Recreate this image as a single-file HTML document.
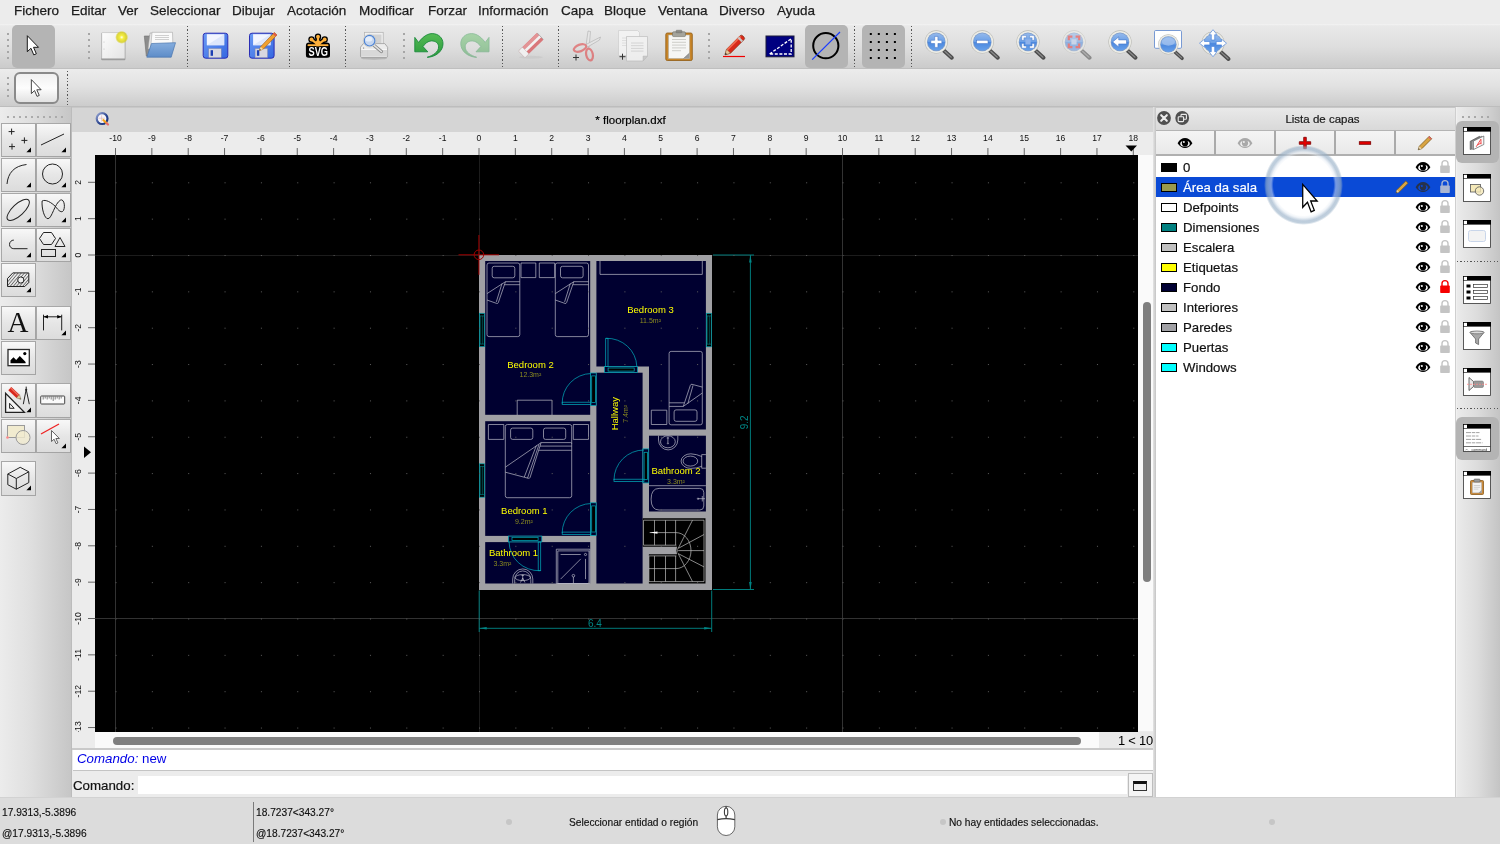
<!DOCTYPE html>
<html lang="es">
<head>
<meta charset="utf-8">
<title>* floorplan.dxf</title>
<style>
*{box-sizing:border-box;margin:0;padding:0}
html,body{width:1500px;height:844px;overflow:hidden;background:#dcdcdc;font-family:"Liberation Sans",sans-serif;color:#000}
body{will-change:transform}
.abs{position:absolute}
#menubar{position:absolute;left:0;top:0;width:1500px;height:24px;background:#ececec}
#menubar span{position:absolute;top:2px;font-size:13.5px;line-height:17px;color:#1c1c1c;white-space:nowrap;-webkit-text-stroke:.25px #1c1c1c}
#tb1{position:absolute;left:0;top:24px;width:1500px;height:45px;background:linear-gradient(#f4f4f4 0,#e9e9e9 4%,#dfdfdf 50%,#cbcbcb 100%);border-bottom:1px solid #bfbfbf}
#tb2{position:absolute;left:0;top:69px;width:1500px;height:38px;background:linear-gradient(#ececec 0,#e2e2e2 45%,#cccccc 100%);border-bottom:1px solid #bdbdbd}
.sel{position:absolute;background:#b4b4b4;border-radius:5px}
.vsep{position:absolute;width:1px;background:repeating-linear-gradient(to bottom,#555 0,#555 1.2px,transparent 1.2px,transparent 3.33px)}
.grip{position:absolute;width:2px;background:repeating-linear-gradient(to bottom,#a6a6a6 0,#a6a6a6 2px,transparent 2px,transparent 6px)}
#left{position:absolute;left:0;top:107px;width:72px;height:691.5px;background:linear-gradient(90deg,#ececec,#e0e0e0 40%,#c6c6c6);border-right:1px solid #bcbcbc}
.tbtn{position:absolute;width:34.5px;height:34.5px;background:linear-gradient(#f8f8f8,#e6e6e6 50%,#dcdcdc);border:1px solid #a4a4a4;border-top-color:#a8a8a8;border-left-color:#a8a8a8}
.tbtn svg{position:absolute;left:-1px;top:-1px}
#center{position:absolute;left:72px;top:107px;width:1081px;height:690px;background:#ececec}
#tabbar{position:absolute;left:0;top:0;width:1081px;height:25px;background:#d5d5d5}
#canvas{position:absolute;left:23px;top:48px;width:1043px;height:577px;background:#000}
#status{position:absolute;left:0;top:797px;width:1500px;height:47px;background:#dcdcdc}
#status div{position:absolute;font-size:10.2px;white-space:nowrap;color:#111;-webkit-text-stroke:.15px}
#right{position:absolute;left:1153px;top:107px;width:301.5px;height:690px;background:#ececec}
#rtb{position:absolute;left:1454.5px;top:107px;width:45.5px;height:690px;background:linear-gradient(90deg,#ececec,#dcdcdc 50%,#c4c4c4)}
</style>
</head>
<body>
<div id="menubar">
<span style="left:14px">Fichero</span>
<span style="left:71px">Editar</span>
<span style="left:118px">Ver</span>
<span style="left:150px">Seleccionar</span>
<span style="left:232px">Dibujar</span>
<span style="left:287px">Acotación</span>
<span style="left:359px">Modificar</span>
<span style="left:428px">Forzar</span>
<span style="left:478px">Información</span>
<span style="left:561px">Capa</span>
<span style="left:604px">Bloque</span>
<span style="left:658px">Ventana</span>
<span style="left:719px">Diverso</span>
<span style="left:777px">Ayuda</span>
</div>
<div id="tb1">
<div class="grip" style="left:7px;top:9px;height:26px"></div>
<div class="sel" style="left:12px;top:1px;width:43px;height:43px"></div>
<div class="grip" style="left:88px;top:9px;height:26px"></div>
<div class="vsep" style="left:187px;top:2px;height:41px"></div>
<div class="vsep" style="left:289px;top:2px;height:41px"></div>
<div class="vsep" style="left:345px;top:2px;height:41px"></div>
<div class="grip" style="left:403px;top:9px;height:26px"></div>
<div class="vsep" style="left:502px;top:2px;height:41px"></div>
<div class="vsep" style="left:558px;top:2px;height:41px"></div>
<div class="grip" style="left:708px;top:9px;height:26px"></div>
<div class="sel" style="left:805px;top:1px;width:43px;height:43px"></div>
<div class="vsep" style="left:854px;top:2px;height:41px"></div>
<div class="sel" style="left:862px;top:1px;width:43px;height:43px"></div>
<div class="vsep" style="left:911px;top:2px;height:41px"></div>
</div>
<div id="tb2">
<div class="grip" style="left:7px;top:8px;height:20px"></div>
<div class="abs" style="left:14px;top:3px;width:44.5px;height:32px;border:2px solid #8a8a8a;border-radius:6px;background:linear-gradient(#f0f0f0,#fdfdfd 50%,#e2e2e2)"></div>
<div class="vsep" style="left:67px;top:2px;height:34px"></div>
</div>
<svg class="abs" style="left:0;top:24px" width="1500" height="84" viewBox="0 24 1500 84" font-family="Liberation Sans, sans-serif">
<defs>
<linearGradient id="gPaper" x1="0" y1="0" x2="1" y2="1"><stop offset="0" stop-color="#fdfdfd"/><stop offset="1" stop-color="#e4e4e4"/></linearGradient>
<radialGradient id="gGlow"><stop offset="0" stop-color="#fffff0"/><stop offset=".3" stop-color="#f4ee40"/><stop offset=".75" stop-color="#d8d020" stop-opacity=".85"/><stop offset="1" stop-color="#d8d020" stop-opacity="0"/></radialGradient>
<linearGradient id="gFold" x1="0" y1="0" x2="0" y2="1"><stop offset="0" stop-color="#86aede"/><stop offset="1" stop-color="#5d8cc8"/></linearGradient>
<linearGradient id="gFlop" x1="0" y1="0" x2="1" y2="1"><stop offset="0" stop-color="#6b9bf5"/><stop offset="1" stop-color="#3567e0"/></linearGradient>
<linearGradient id="gLens" x1="0" y1="0" x2="0" y2="1"><stop offset="0" stop-color="#94b9ec"/><stop offset=".5" stop-color="#6a9fe6"/><stop offset=".52" stop-color="#4c88de"/><stop offset="1" stop-color="#66a0ea"/></linearGradient>
<linearGradient id="gGreen" x1="0" y1="0" x2="0" y2="1"><stop offset="0" stop-color="#55bb55"/><stop offset="1" stop-color="#2a9a3c"/></linearGradient>
<g id="mag"><path d="M7.500 8.500L15.500 15.800" stroke="#4d4d4d" stroke-width="4" stroke-linecap="round"/><path d="M8.500 9.400L15 15.300" stroke="#8a8a8a" stroke-width="1.200" stroke-linecap="round"/><circle r="11.600" fill="#b9b9b3"/><circle r="11" fill="#ecece6"/><circle r="9.300" fill="#7f9cc8"/><circle r="8.700" fill="url(#gLens)"/></g>
<g id="arrow"><path d="M2.800 2.200v19.600l4.500-4.200 3.400 8.100 3.100-1.300-3.400-7.900h6.100z" fill="#fff" stroke="#000" stroke-width="1.200"/></g>
</defs>
<g transform="translate(25.3,34.1) scale(.8)"><path d="M2.500 2v20l4.600-4.300 3.500 8.300 3.200-1.400-3.500-8.100h6.200z" fill="#fff" stroke="#111" stroke-width="1.200"/></g>
<g transform="translate(29.6,78.2) scale(.7)"><path d="M2.500 2v20l4.600-4.300 3.500 8.300 3.200-1.400-3.500-8.100h6.200z" fill="#fff" stroke="#333" stroke-width="1.300"/></g>
<rect x="101.200" y="32.800" width="24.200" height="27.400" rx="1" fill="#9a9a9a"/><rect x="101.700" y="32.600" width="23.200" height="26" rx=".8" fill="url(#gPaper)" stroke="#bdbdbd" stroke-width=".6"/><circle cx="104" cy="42" r=".5" fill="#bbb"/><circle cx="104" cy="49" r=".5" fill="#bbb"/><circle cx="121.700" cy="37.300" r="6.600" fill="url(#gGlow)"/>
<path d="M144.300 36h5l1.500-1.500h9v21.500h-13.500z" fill="#8c8c8c" stroke="#6e6e6e" stroke-width=".6"/><path d="M150 33h21.500l-1 16h-22.500z" fill="#e8e8e8" stroke="#9a9a9a" stroke-width=".5"/><path d="M152 32.300h20.500l.5 17h-22.500z" fill="#fafafa" stroke="#9a9a9a" stroke-width=".5"/><path d="M155 35.500h14M155 37.500h14M155 39.500h14" stroke="#c4c4c4" stroke-width=".8"/><path d="M151.500 43.500l24-.8-4.300 14.500h-24.400z" fill="url(#gFold)" stroke="#4a76ae" stroke-width=".7"/>
<rect x="203.2" y="33.200" width="24.600" height="25" rx="2.500" fill="url(#gFlop)" stroke="#2a2db4" stroke-width="1"/><rect x="206.79999999999998" y="34.200" width="17.400" height="11" fill="#f2f5ff"/><path d="M206.79999999999998 45.200l17.400-11v11z" fill="#dde6fb"/><rect x="208.79999999999998" y="48.600" width="12.400" height="9" fill="#d8d8e0" stroke="#8a8aa0" stroke-width=".4"/><rect x="210.6" y="50.200" width="2.400" height="5.600" fill="#1c3fb4"/>
<rect x="249.5" y="33.200" width="24.600" height="25" rx="2.500" fill="url(#gFlop)" stroke="#2a2db4" stroke-width="1"/><rect x="253.1" y="34.200" width="17.400" height="11" fill="#f2f5ff"/><path d="M253.1 45.200l17.400-11v11z" fill="#dde6fb"/><rect x="255.1" y="48.600" width="12.400" height="9" fill="#d8d8e0" stroke="#8a8aa0" stroke-width=".4"/><rect x="256.9" y="50.200" width="2.400" height="5.600" fill="#1c3fb4"/>
<path d="M274.300 32.400l2.700 2.600-13.800 14.200-3.800 1.400 1.300-3.900z" fill="#f0a030" stroke="#9c5a10" stroke-width=".6"/><path d="M259.400 50.600l1.300-3.900 2.500 2.500z" fill="#f0dcb0"/><path d="M259.400 50.600l.55-1.600 1 1z" fill="#222"/><path d="M274.300 32.400l2.700 2.600-1.500 1.500-2.700-2.600z" fill="#e05a4a"/>
<g stroke-linecap="round"><path d="M318 44.500V36.900M318 44.500L311.600 39.700M318 44.500L324.600 39.700" stroke="#000" stroke-width="4.800"/><circle cx="318" cy="36.700" r="3.200" fill="#000"/><circle cx="311.500" cy="39.500" r="3.200" fill="#000"/><circle cx="324.700" cy="39.500" r="3.200" fill="#000"/><rect x="305.900" y="42.600" width="24.100" height="15.200" rx="3.200" fill="#000"/><path d="M318 44.500V36.900M318 44.500L311.600 39.700M318 44.500L324.600 39.700" stroke="#ffb13b" stroke-width="2.200"/><circle cx="318" cy="36.700" r="1.900" fill="#ffb13b"/><circle cx="311.500" cy="39.500" r="1.900" fill="#ffb13b"/><circle cx="324.700" cy="39.500" r="1.900" fill="#ffb13b"/><path d="M318 45V42.500" stroke="#ffb13b" stroke-width="4.600"/></g><rect x="307.500" y="44.300" width="21" height="1.900" rx=".9" fill="#ffb13b"/><rect x="306.500" y="46.400" width="23" height="10.800" fill="#000"/><text x="318.300" y="56.300" font-size="12.800" font-weight="bold" fill="#fff" text-anchor="middle" textLength="19.500" lengthAdjust="spacingAndGlyphs">SVG</text>
<ellipse cx="374" cy="58.200" rx="13" ry="1.600" fill="#9a9a9a" opacity=".55"/><rect x="364.500" y="32.300" width="18.700" height="13" fill="#f0f0f0" stroke="#b0b0b0" stroke-width=".7"/><rect x="372.500" y="34.500" width="9" height="9" fill="#d2d2d2"/><path d="M360.500 47.200l2.800-3.600h21.500l2.800 3.600v8.800a1.500 1.500 0 0 1-1.500 1.500h-24.100a1.500 1.500 0 0 1-1.500-1.500z" fill="#ececec" stroke="#9c9c9c" stroke-width=".8"/><path d="M361 50h26.200v6.600h-26.200z" fill="#d8d8d8"/><path d="M361.500 49.500h25.500" stroke="#fafafa" stroke-width=".8"/><circle cx="363.600" cy="48" r=".6" fill="#666"/><path d="M373.800 45.200l7.600 6.300" stroke="#8c8c8c" stroke-width="3.400" stroke-linecap="round"/><path d="M373.800 45.200l7.600 6.300" stroke="#e4e4e4" stroke-width="1.500" stroke-linecap="round"/><circle cx="369.600" cy="40.700" r="6.400" fill="#ecece8" stroke="#b8b8b0" stroke-width=".5"/><circle cx="369.600" cy="40.700" r="5.300" fill="#c4d6f0" stroke="#4f84d4" stroke-width="1.200"/><ellipse cx="368.800" cy="39" rx="3.600" ry="2.600" fill="#eaf1fb" opacity=".85"/>
<path d="M414.800 37.400L418.600 42.500C421 39 426 33.600 432.200 33.600C438.500 33.600 443 38 443 43.700C443 51 436 57 427.200 57.300C433 55.500 438.600 52 438.600 46.900C438.600 43 435.500 40.900 431.600 40.900C428 40.900 425 43.500 423 46.600L427.800 51.800L414.800 51.800z" fill="url(#gGreen)" stroke="#1b8a3c" stroke-width=".9" stroke-linejoin="round"/>
<g transform="translate(903.800,0) scale(-1,1)" opacity=".42"><path d="M414.800 37.400L418.600 42.500C421 39 426 33.600 432.200 33.600C438.500 33.600 443 38 443 43.700C443 51 436 57 427.200 57.300C433 55.500 438.600 52 438.600 46.900C438.600 43 435.500 40.900 431.600 40.900C428 40.900 425 43.500 423 46.600L427.800 51.800L414.800 51.800z" fill="url(#gGreen)" stroke="#1b8a3c" stroke-width=".9" stroke-linejoin="round"/></g>
<ellipse cx="531" cy="57.300" rx="12" ry="1.500" fill="#c4c4c4" opacity=".6"/><g transform="translate(531,45.300) rotate(-44.200)"><rect x="-13" y="-4.700" width="26" height="9.400" rx="1" fill="#d9777a"/><rect x="-7.500" y="-4.700" width="20.500" height="3.400" fill="#e39496"/><rect x="-13" y="-4.700" width="5.500" height="9.400" rx=".8" fill="#f0f0f0" stroke="#b8b8b8" stroke-width=".4"/><rect x="-7.500" y="-1.300" width="20.500" height="2.600" fill="#f2f2f2"/><path d="M13 -4.500v9" stroke="#a8a8a8" stroke-width=".8"/></g>
<g opacity=".6"><path d="M588 31l2.500.5-1.500 16-3-1.500z" fill="#e8e8e8" stroke="#888" stroke-width=".6"/><path d="M600.500 37l-1 3-12 7-1.500-2.500z" fill="#e8e8e8" stroke="#888" stroke-width=".6"/><ellipse cx="580" cy="48" rx="6.500" ry="3.300" transform="rotate(-20 580 48)" fill="none" stroke="#e0484a" stroke-width="2.200"/><ellipse cx="589.500" cy="54.500" rx="3.300" ry="6" transform="rotate(-12 589.500 54.500)" fill="none" stroke="#e0484a" stroke-width="2.200"/></g><path d="M573 57.500h6M576 54.500v6" stroke="#333" stroke-width="1"/>
<g opacity=".8"><path d="M618.500 30.500h19l2 2v23h-21z" fill="#f6f6f6" stroke="#c4c4c4" stroke-width=".6"/><path d="M622 38h9M622 40.500h9M622 43h9M622 45.500h9" stroke="#d8d8d8" stroke-width=".8"/><path d="M626.500 36.500h21v19.500l-4.500 5h-16.500z" fill="#f4f4f4" stroke="#b4b4b4" stroke-width=".7"/><path d="M647.500 56l-4.500 5v-5z" fill="#c8c8c8" stroke="#aaa" stroke-width=".4"/><path d="M631 43h12.500M631 45.700h12.500M631 48.400h12.500M631 51.100h12.500" stroke="#cdcdcd" stroke-width=".9"/></g><path d="M619.500 56.700h6M622.500 53.700v6" stroke="#333" stroke-width="1"/>
<rect x="665.800" y="33" width="26.500" height="27.500" rx="1.500" fill="#c8862a" stroke="#8f5a12" stroke-width=".8"/><path d="M668.500 35h21v23.500h-21z" fill="#f6f6f4" stroke="#a8a8a0" stroke-width=".5"/><path d="M672 39.500h14M672 42.300h14M672 45.100h14M672 47.900h14M672 50.700h9" stroke="#c8c8c4" stroke-width=".9"/><path d="M689.500 53v5.500h-6z" fill="#9a9a98"/><path d="M683.500 58.500l6-5.500" stroke="#666" stroke-width=".5"/><rect x="672.500" y="31.800" width="13" height="4.800" rx="1.200" fill="#a4a49c" stroke="#6e6e66" stroke-width=".6"/><rect x="676" y="30.200" width="6" height="2.600" rx=".8" fill="#8a8a84" stroke="#666" stroke-width=".4"/>
<path d="M723 56.500h22" stroke="#f00000" stroke-width="1.200"/><g transform="translate(725,54.800) rotate(-45)"><path d="M0 0l5-2.800h19a2 2 0 0 1 2 2v1.600a2 2 0 0 1-2 2h-19z" fill="#d82a1a" stroke="#7a2a10" stroke-width=".6"/><path d="M5-2.800h19v1.800h-19z" fill="#f06a50"/><path d="M0 0l5-2.800v5.600z" fill="#e8c89a" stroke="#7a5a3a" stroke-width=".4"/><path d="M0 0l1.800-1v2z" fill="#222"/><rect x="20.500" y="-2.800" width="2.200" height="5.600" fill="#c8c8c8"/></g>
<rect x="766" y="36" width="28" height="20.800" fill="#000080" stroke="#1a1a3a" stroke-width="1"/><path d="M769.600 54L791.200 38.700V54z" fill="none" stroke="#fff" stroke-width="1.300" stroke-dasharray="3 1.600"/>
<circle cx="825.800" cy="45.700" r="12.600" fill="none" stroke="#000" stroke-width="2"/><path d="M812.200 59.600L840 32" stroke="#1a3cff" stroke-width="1.200"/>
<rect x="869.8" y="33" width="2" height="2" fill="#000"/>
<rect x="869.8" y="41" width="2" height="2" fill="#000"/>
<rect x="869.8" y="49" width="2" height="2" fill="#000"/>
<rect x="869.8" y="57" width="2" height="2" fill="#000"/>
<rect x="877.8" y="33" width="2" height="2" fill="#000"/>
<rect x="877.8" y="41" width="2" height="2" fill="#000"/>
<rect x="877.8" y="49" width="2" height="2" fill="#000"/>
<rect x="877.8" y="57" width="2" height="2" fill="#000"/>
<rect x="885.9" y="33" width="2" height="2" fill="#000"/>
<rect x="885.9" y="41" width="2" height="2" fill="#000"/>
<rect x="885.9" y="49" width="2" height="2" fill="#000"/>
<rect x="885.9" y="57" width="2" height="2" fill="#000"/>
<rect x="893.9" y="33" width="2" height="2" fill="#000"/>
<rect x="893.9" y="41" width="2" height="2" fill="#000"/>
<rect x="893.9" y="49" width="2" height="2" fill="#000"/>
<rect x="893.9" y="57" width="2" height="2" fill="#000"/>
<g transform="translate(936.3,41.900)" opacity="1"><use href="#mag"/><path d="M-5.500 -1.600h3.900v-3.900h3.200v3.900h3.900v3.200h-3.900v3.900h-3.200v-3.900h-3.900z" fill="#fff" stroke="#3a6cc0" stroke-width=".5"/></g>
<g transform="translate(982.3,41.900)" opacity="1"><use href="#mag"/><rect x="-5.700" y="-1.700" width="11.400" height="3.400" fill="#fff" stroke="#3a6cc0" stroke-width=".5"/></g>
<g transform="translate(1028,41.900)" opacity="1"><use href="#mag"/><rect x="-2.600" y="-2.600" width="5.200" height="5.200" fill="#8fb2ea"/><path d="M-6.300-1.600v-4.700h4.700v2.200h-2.500v2.500zM6.300-1.600v-4.700h-4.700v2.200h2.500v2.500zM-6.300 1.600v4.700h4.700v-2.200h-2.500v-2.500zM6.300 1.600v4.700h-4.700v-2.200h2.500v-2.500z" fill="#fff" stroke="#3a6cc0" stroke-width=".4"/></g>
<g transform="translate(1074,41.900)" opacity="0.55"><use href="#mag"/><rect x="-2.600" y="-2.600" width="5.200" height="5.200" fill="#b9cdf0"/><path d="M-6.300-1.600v-4.700h4.700v2.200h-2.500v2.500zM6.300-1.600v-4.700h-4.700v2.200h2.500v2.500zM-6.300 1.600v4.700h4.700v-2.200h-2.500v-2.500zM6.300 1.600v4.700h-4.700v-2.200h2.500v-2.500z" fill="#e63030"/></g>
<g transform="translate(1120,41.900)" opacity="1"><use href="#mag"/><path d="M-7.300 0l6-5v3h7.800v4h-7.800v3z" fill="#fff" stroke="#3a6cc0" stroke-width=".5"/></g>
<rect x="1154.500" y="30.500" width="27" height="17.800" rx="1.200" fill="#fff" stroke="#6a90d0" stroke-width=".9"/>
<g transform="translate(1168.400,44.400) scale(.88)"><use href="#mag"/><ellipse cx="0" cy="-3" rx="7.500" ry="4.500" fill="#a9c6f0" opacity=".7"/></g>
<g transform="translate(1213,43.200)"><use href="#mag"/><g fill="#fff" stroke="#3a78d8" stroke-width=".6"><path d="M0-13.500l4 5h-2.300v5.300h-3.400v-5.300h-2.300z"/><path d="M0-13.500l4 5h-2.300v5.300h-3.400v-5.300h-2.300z" transform="rotate(90)"/><path d="M0-13.500l4 5h-2.300v5.300h-3.400v-5.300h-2.300z" transform="rotate(180)"/><path d="M0-13.500l4 5h-2.300v5.300h-3.400v-5.300h-2.300z" transform="rotate(270)"/></g></g>
</svg>
<div id="left">
<div class="abs" style="left:7px;top:9px;width:57px;height:2px;background:repeating-linear-gradient(to right,#ababab 0,#ababab 2px,transparent 2px,transparent 6px)"></div>
<div class="tbtn" style="left:1.2px;top:15.5px"><svg width="34" height="34" viewBox="0 0 34 34"><path d="M7.6 8.6h6M10.6 5.6v6M20.4 17.4h6M23.4 14.4v6M8 23.6h6M11 20.6v6" fill="none" stroke="#222" stroke-width="1"/><path d="M30 24.600v4.600h-4.600z" fill="#000"/></svg></div>
<div class="tbtn" style="left:36.4px;top:15.5px"><svg width="34" height="34" viewBox="0 0 34 34"><path d="M5 22L28 11" fill="none" stroke="#222" stroke-width="1"/><path d="M30 24.600v4.600h-4.600z" fill="#000"/></svg></div>
<div class="tbtn" style="left:1.2px;top:50.5px"><svg width="34" height="34" viewBox="0 0 34 34"><path d="M6 26C7 15 13 8 25.5 6.5" fill="none" stroke="#222" stroke-width="1"/><path d="M30 24.600v4.600h-4.600z" fill="#000"/></svg></div>
<div class="tbtn" style="left:36.4px;top:50.5px"><svg width="34" height="34" viewBox="0 0 34 34"><circle cx="16.5" cy="16" r="10" fill="none" stroke="#222" stroke-width="1"/><path d="M30 24.600v4.600h-4.600z" fill="#000"/></svg></div>
<div class="tbtn" style="left:1.2px;top:85.5px"><svg width="34" height="34" viewBox="0 0 34 34"><ellipse cx="17.200" cy="16.900" rx="14.300" ry="5.700" transform="rotate(-43 17.200 16.900)" fill="none" stroke="#222" stroke-width="1"/><path d="M30 24.600v4.600h-4.600z" fill="#000"/></svg></div>
<div class="tbtn" style="left:36.4px;top:85.5px"><svg width="34" height="34" viewBox="0 0 34 34"><path d="M6.100 8C5.500 15.500 8.500 26 12 25.700C16 25.500 18.500 10.500 24.500 7.100C28 5.500 29.500 13.500 27.500 17.500C25.500 20.500 22.500 17.500 19.400 13.500C15.500 9.500 9.500 6 6.100 8z" fill="none" stroke="#222" stroke-width="1"/><path d="M30 24.600v4.600h-4.600z" fill="#000"/></svg></div>
<div class="tbtn" style="left:1.2px;top:120.5px"><svg width="34" height="34" viewBox="0 0 34 34"><path d="M26.500 20.700H12.800a4.300 4.300 0 0 1 0-8.600" fill="none" stroke="#222" stroke-width="1"/><path d="M30 24.600v4.600h-4.600z" fill="#000"/></svg></div>
<div class="tbtn" style="left:36.4px;top:120.5px"><svg width="34" height="34" viewBox="0 0 34 34"><path d="M7.500 4.500h8l4 6-4 6h-8l-4-6z" fill="none" stroke="#222" stroke-width="1"/><path d="M24 9.500l5 9h-10z" fill="none" stroke="#222" stroke-width="1"/><rect x="5.500" y="21.500" width="14" height="7" fill="none" stroke="#222" stroke-width="1"/><path d="M30 24.600v4.600h-4.600z" fill="#000"/></svg></div>
<div class="tbtn" style="left:1.2px;top:155.5px"><svg width="34" height="34" viewBox="0 0 34 34"><defs><pattern id="hp" width="2.400" height="2.400" patternUnits="userSpaceOnUse" patternTransform="rotate(-50)"><rect width="2.400" height=".7" fill="#555"/></pattern></defs><path d="M6.500 23.500V15.500l5.300-5.600h16v9.600l-4 4z" fill="url(#hp)" stroke="#222" stroke-width="1"/><circle cx="19.800" cy="17" r="3.100" fill="#f0f0f0" stroke="#222" stroke-width="1"/><path d="M30 24.600v4.600h-4.600z" fill="#000"/></svg></div>
<div class="tbtn" style="left:1.2px;top:198.5px"><svg width="34" height="34" viewBox="0 0 34 34"><text x="17" y="26.200" font-family="Liberation Serif,serif" font-size="29" text-anchor="middle" fill="#111">A</text></svg></div>
<div class="tbtn" style="left:36.4px;top:198.5px"><svg width="34" height="34" viewBox="0 0 34 34"><path d="M7.500 8.700v15.700M25.700 8.700v15.700M7.500 10.800h18.200" fill="none" stroke="#222" stroke-width="1"/><path d="M7.500 10.800l4.500-1.800v3.600zM25.700 10.800l-4.500-1.800v3.600z" fill="#000"/><path d="M30 24.600v4.600h-4.600z" fill="#000"/></svg></div>
<div class="tbtn" style="left:1.2px;top:233.5px"><svg width="34" height="34" viewBox="0 0 34 34"><rect x="7" y="8.500" width="21.300" height="16.200" fill="#fff" stroke="#2a2a2a" stroke-width="1.300"/><path d="M9.500 22.300v-3l3-3 2.700 2.600 3.600-4 5.800 6.200v1.200z" fill="#000"/><circle cx="23.800" cy="12.600" r="1.600" fill="#000"/></svg></div>
<div class="tbtn" style="left:1.2px;top:276px"><svg width="34" height="34" viewBox="0 0 34 34"><path d="M4.6 10.4V29.3H23.4z" fill="#f4f4f4" stroke="#222" stroke-width="1.3"/><path d="M8.6 20.3v5h4.6z" fill="#f4f4f4" stroke="#222" stroke-width="1"/><path d="M8.8 5.6l8.2 7.8" stroke="#d8281c" stroke-width="4.4"/><path d="M9.6 4.9l8.2 7.8" stroke="#f07060" stroke-width="1.2"/><path d="M15.4 14.9l3.1-3.2 1.5 4.6z" fill="#e8c89a" stroke="#553" stroke-width=".4"/><path d="M19 15.200l1 1.100-1.500-.4z" fill="#222"/><path d="M25.2 6.4l-2.900 14.800M25.2 6.400l3.100 14.800M25.2 3.600v2.400" fill="none" stroke="#222" stroke-width="1"/><circle cx="25.2" cy="6.800" r="1.100" fill="#222"/><path d="M30 24.600v4.600h-4.600z" fill="#000"/></svg></div>
<div class="tbtn" style="left:36.4px;top:276px"><svg width="34" height="34" viewBox="0 0 34 34"><g transform="translate(-.8,1.500)"><rect x="5.500" y="11.500" width="24" height="8" rx=".8" fill="#fafafa" stroke="#444" stroke-width="1"/><path d="M8 12v3M10 12v2M12 12v3M14 12v2M16 12v3M18 12v4.500M20 12v3M22 12v2M24 12v3M26 12v2" stroke="#333" stroke-width=".6"/></g></svg></div>
<div class="tbtn" style="left:1.2px;top:311.5px"><svg width="34" height="34" viewBox="0 0 34 34"><rect x="6.500" y="6.500" width="17" height="12" fill="#f1ebcf" stroke="#9a9a9a" stroke-width="1"/><circle cx="22" cy="18.500" r="7" fill="#f1ebcf" fill-opacity=".8" stroke="#9a9a9a" stroke-width="1"/><circle cx="6.500" cy="18.500" r="1.300" fill="#f88"/></svg></div>
<div class="tbtn" style="left:36.4px;top:311.5px"><svg width="34" height="34" viewBox="0 0 34 34"><path d="M5 15L23 5" stroke="#e22" stroke-width="1.300"/><path d="M15.500 11.500v11l2.600-2.300 2 4.500 1.800-.8-2-4.400h3.500z" fill="#fff" stroke="#555" stroke-width=".9"/><path d="M30 24.600v4.600h-4.600z" fill="#000"/></svg></div>
<div class="tbtn" style="left:1.2px;top:354px"><svg width="34" height="34" viewBox="0 0 34 34"><path d="M6.8 13L19.2 6.300L27.8 10.800V21.600L15.300 28.200L6.800 23.700zM6.800 13L15.300 17.500L27.800 10.800M15.300 17.500V28.200" fill="none" stroke="#222" stroke-width="1" stroke-linejoin="round"/><path d="M30 24.600v4.600h-4.600z" fill="#000"/></svg></div>
</div>
<div id="center">
<div id="tabbar"></div>
<div class="abs" style="left:0;top:0;width:1081px;height:1px;background:#c8c8c8"></div>
<div class="abs" style="left:0;width:1081px;top:5.5px;height:14px;text-align:center;font-size:11.5px;line-height:14px;padding-left:36px;-webkit-text-stroke:.2px">* floorplan.dxf</div>
<div id="canvas"></div>
<div class="abs" style="left:1066px;top:48px;width:15px;height:576px;background:#fafafa"></div>
<div class="abs" style="left:1071px;top:195px;width:8px;height:280px;border-radius:4px;background:#7f7f7f"></div>
<div class="abs" style="left:23px;top:625px;width:1004px;height:16px;background:#fafafa"></div>
<div class="abs" style="left:41px;top:630px;width:968px;height:8px;border-radius:4px;background:#7f7f7f"></div>
<div class="abs" style="left:1027px;top:625px;width:54px;height:16px;background:#e9e9e9;font-size:12.9px;line-height:18px;text-align:right;padding-right:0px;letter-spacing:-0.2px">1 &lt; 10</div>
<div class="abs" style="left:0;top:641px;width:1081px;height:49px;background:#ececec"></div>
<div class="abs" style="left:0;top:641px;width:1081px;height:2px;background:#c9c9c9"></div>
<div class="abs" style="left:1px;top:643px;width:1080px;height:21px;background:#fff;border-bottom:1px solid #c4c4c4;font-size:13.3px;line-height:17px;color:#0000e6;padding-left:4px"><i>Comando:</i> new</div>
<div class="abs" style="left:1px;top:671px;width:64px;height:16px;font-size:13.3px;line-height:16px;color:#111;-webkit-text-stroke:.2px">Comando:</div>
<div class="abs" style="left:66px;top:669px;width:988.5px;height:18px;background:#fff"></div>
<div class="abs" style="left:1055.5px;top:665.5px;width:25px;height:24.5px;background:#f4f4f4;border:1px solid #bdbdbd"><div class="abs" style="left:4.500px;top:7px;width:14px;height:10px;border:1px solid #333;border-top:3px solid #111;background:#efefef"></div></div>
</div>
<svg class="abs" style="left:0;top:0" width="1500" height="844" viewBox="0 0 1500 844" font-family="Liberation Sans, sans-serif">
<rect x="115.00" y="148" width="1" height="7" fill="#666"/>
<text x="115.50" y="140.6" font-size="8.6" text-anchor="middle" fill="#111">-10</text>
<rect x="151.35" y="148" width="1" height="7" fill="#666"/>
<text x="151.85" y="140.6" font-size="8.6" text-anchor="middle" fill="#111">-9</text>
<rect x="187.70" y="148" width="1" height="7" fill="#666"/>
<text x="188.20" y="140.6" font-size="8.6" text-anchor="middle" fill="#111">-8</text>
<rect x="224.05" y="148" width="1" height="7" fill="#666"/>
<text x="224.55" y="140.6" font-size="8.6" text-anchor="middle" fill="#111">-7</text>
<rect x="260.40" y="148" width="1" height="7" fill="#666"/>
<text x="260.90" y="140.6" font-size="8.6" text-anchor="middle" fill="#111">-6</text>
<rect x="296.75" y="148" width="1" height="7" fill="#666"/>
<text x="297.25" y="140.6" font-size="8.6" text-anchor="middle" fill="#111">-5</text>
<rect x="333.10" y="148" width="1" height="7" fill="#666"/>
<text x="333.60" y="140.6" font-size="8.6" text-anchor="middle" fill="#111">-4</text>
<rect x="369.45" y="148" width="1" height="7" fill="#666"/>
<text x="369.95" y="140.6" font-size="8.6" text-anchor="middle" fill="#111">-3</text>
<rect x="405.80" y="148" width="1" height="7" fill="#666"/>
<text x="406.30" y="140.6" font-size="8.6" text-anchor="middle" fill="#111">-2</text>
<rect x="442.15" y="148" width="1" height="7" fill="#666"/>
<text x="442.65" y="140.6" font-size="8.6" text-anchor="middle" fill="#111">-1</text>
<rect x="478.50" y="148" width="1" height="7" fill="#666"/>
<text x="479.00" y="140.6" font-size="8.6" text-anchor="middle" fill="#111">0</text>
<rect x="514.85" y="148" width="1" height="7" fill="#666"/>
<text x="515.35" y="140.6" font-size="8.6" text-anchor="middle" fill="#111">1</text>
<rect x="551.20" y="148" width="1" height="7" fill="#666"/>
<text x="551.70" y="140.6" font-size="8.6" text-anchor="middle" fill="#111">2</text>
<rect x="587.55" y="148" width="1" height="7" fill="#666"/>
<text x="588.05" y="140.6" font-size="8.6" text-anchor="middle" fill="#111">3</text>
<rect x="623.90" y="148" width="1" height="7" fill="#666"/>
<text x="624.40" y="140.6" font-size="8.6" text-anchor="middle" fill="#111">4</text>
<rect x="660.25" y="148" width="1" height="7" fill="#666"/>
<text x="660.75" y="140.6" font-size="8.6" text-anchor="middle" fill="#111">5</text>
<rect x="696.60" y="148" width="1" height="7" fill="#666"/>
<text x="697.10" y="140.6" font-size="8.6" text-anchor="middle" fill="#111">6</text>
<rect x="732.95" y="148" width="1" height="7" fill="#666"/>
<text x="733.45" y="140.6" font-size="8.6" text-anchor="middle" fill="#111">7</text>
<rect x="769.30" y="148" width="1" height="7" fill="#666"/>
<text x="769.80" y="140.6" font-size="8.6" text-anchor="middle" fill="#111">8</text>
<rect x="805.65" y="148" width="1" height="7" fill="#666"/>
<text x="806.15" y="140.6" font-size="8.6" text-anchor="middle" fill="#111">9</text>
<rect x="842.00" y="148" width="1" height="7" fill="#666"/>
<text x="842.50" y="140.6" font-size="8.6" text-anchor="middle" fill="#111">10</text>
<rect x="878.35" y="148" width="1" height="7" fill="#666"/>
<text x="878.85" y="140.6" font-size="8.6" text-anchor="middle" fill="#111">11</text>
<rect x="914.70" y="148" width="1" height="7" fill="#666"/>
<text x="915.20" y="140.6" font-size="8.6" text-anchor="middle" fill="#111">12</text>
<rect x="951.05" y="148" width="1" height="7" fill="#666"/>
<text x="951.55" y="140.6" font-size="8.6" text-anchor="middle" fill="#111">13</text>
<rect x="987.40" y="148" width="1" height="7" fill="#666"/>
<text x="987.90" y="140.6" font-size="8.6" text-anchor="middle" fill="#111">14</text>
<rect x="1023.75" y="148" width="1" height="7" fill="#666"/>
<text x="1024.25" y="140.6" font-size="8.6" text-anchor="middle" fill="#111">15</text>
<rect x="1060.10" y="148" width="1" height="7" fill="#666"/>
<text x="1060.60" y="140.6" font-size="8.6" text-anchor="middle" fill="#111">16</text>
<rect x="1096.45" y="148" width="1" height="7" fill="#666"/>
<text x="1096.95" y="140.6" font-size="8.6" text-anchor="middle" fill="#111">17</text>
<rect x="1132.80" y="148" width="1" height="7" fill="#666"/>
<text x="1133.30" y="140.6" font-size="8.6" text-anchor="middle" fill="#111">18</text>
<defs><clipPath id="vrclip"><rect x="72" y="155" width="23" height="577"/></clipPath></defs><g clip-path="url(#vrclip)">
<rect x="88" y="727.05" width="7" height="1" fill="#666"/>
<text transform="translate(81,727.55) rotate(-90)" font-size="8.6" text-anchor="middle" fill="#111">-13</text>
<rect x="88" y="690.70" width="7" height="1" fill="#666"/>
<text transform="translate(81,691.20) rotate(-90)" font-size="8.6" text-anchor="middle" fill="#111">-12</text>
<rect x="88" y="654.35" width="7" height="1" fill="#666"/>
<text transform="translate(81,654.85) rotate(-90)" font-size="8.6" text-anchor="middle" fill="#111">-11</text>
<rect x="88" y="618.00" width="7" height="1" fill="#666"/>
<text transform="translate(81,618.50) rotate(-90)" font-size="8.6" text-anchor="middle" fill="#111">-10</text>
<rect x="88" y="581.65" width="7" height="1" fill="#666"/>
<text transform="translate(81,582.15) rotate(-90)" font-size="8.6" text-anchor="middle" fill="#111">-9</text>
<rect x="88" y="545.30" width="7" height="1" fill="#666"/>
<text transform="translate(81,545.80) rotate(-90)" font-size="8.6" text-anchor="middle" fill="#111">-8</text>
<rect x="88" y="508.95" width="7" height="1" fill="#666"/>
<text transform="translate(81,509.45) rotate(-90)" font-size="8.6" text-anchor="middle" fill="#111">-7</text>
<rect x="88" y="472.60" width="7" height="1" fill="#666"/>
<text transform="translate(81,473.10) rotate(-90)" font-size="8.6" text-anchor="middle" fill="#111">-6</text>
<rect x="88" y="436.25" width="7" height="1" fill="#666"/>
<text transform="translate(81,436.75) rotate(-90)" font-size="8.6" text-anchor="middle" fill="#111">-5</text>
<rect x="88" y="399.90" width="7" height="1" fill="#666"/>
<text transform="translate(81,400.40) rotate(-90)" font-size="8.6" text-anchor="middle" fill="#111">-4</text>
<rect x="88" y="363.55" width="7" height="1" fill="#666"/>
<text transform="translate(81,364.05) rotate(-90)" font-size="8.6" text-anchor="middle" fill="#111">-3</text>
<rect x="88" y="327.20" width="7" height="1" fill="#666"/>
<text transform="translate(81,327.70) rotate(-90)" font-size="8.6" text-anchor="middle" fill="#111">-2</text>
<rect x="88" y="290.85" width="7" height="1" fill="#666"/>
<text transform="translate(81,291.35) rotate(-90)" font-size="8.6" text-anchor="middle" fill="#111">-1</text>
<rect x="88" y="254.50" width="7" height="1" fill="#666"/>
<text transform="translate(81,255.00) rotate(-90)" font-size="8.6" text-anchor="middle" fill="#111">0</text>
<rect x="88" y="218.15" width="7" height="1" fill="#666"/>
<text transform="translate(81,218.65) rotate(-90)" font-size="8.6" text-anchor="middle" fill="#111">1</text>
<rect x="88" y="181.80" width="7" height="1" fill="#666"/>
<text transform="translate(81,182.30) rotate(-90)" font-size="8.6" text-anchor="middle" fill="#111">2</text>
</g>
<path d="M1125.5 145.5h11.5l-5.7 6z" fill="#000"/>
<path d="M84 446.5v11.5l7-5.7z" fill="#000"/>
<defs><linearGradient id="gQ" x1="0" y1="0" x2="1" y2="1"><stop offset="0" stop-color="#9aa8d4"/><stop offset=".55" stop-color="#2c4690"/><stop offset="1" stop-color="#182f78"/></linearGradient></defs><circle cx="102.1" cy="118.6" r="5.4" fill="#f6f6fa" stroke="url(#gQ)" stroke-width="2.2"/><path d="M98.400 118.200h6.500M101.600 115.300v6.400" stroke="#d8a0a8" stroke-width=".5"/><path d="M102.800 119.400l4.400 4.400" stroke="#f5a418" stroke-width="2.100" stroke-linecap="butt"/><path d="M106.700 123.300l1.300 1.300" stroke="#e86a6a" stroke-width="2.100" stroke-linecap="round"/><path d="M101.700 118.300l1.900.4-1.500 1.500z" fill="#f3dca0"/>
<g id="cv" clip-path="url(#cvclip)">
<defs><clipPath id="cvclip"><rect x="95" y="155" width="1043" height="577"/></clipPath>
<pattern id="grid" x="479.0" y="255.0" width="36.35" height="36.35" patternUnits="userSpaceOnUse"><rect x="0" y="0" width="1" height="1" fill="#5e5e5e"/></pattern></defs>
<rect x="115" y="155" width="1" height="577" fill="#323232"/>
<rect x="479" y="155" width="1" height="577" fill="#1c1c1c"/>
<rect x="842" y="155" width="1" height="577" fill="#323232"/>
<rect x="95" y="255" width="1043" height="1" fill="#1c1c1c"/>
<rect x="95" y="618" width="1043" height="1" fill="#323232"/>
<!-- walls -->
<rect x="479" y="255" width="233" height="335" fill="#a0a0a4"/>
<!-- rooms -->
<g fill="#000030">
<rect x="485.2" y="261" width="105" height="153.800"/>
<rect x="485.2" y="421.2" width="105" height="114.700"/>
<rect x="485.2" y="542.1" width="105" height="41.400"/>
<path d="M596.400 261H705.900V429.500H649V366.400H596.400z"/>
<rect x="596.4" y="372.700" width="46.200" height="210.800"/>
<rect x="649" y="435.7" width="56.900" height="75.800"/>
</g>
<path d="M642.600 518.300H705.500V583.600H648.900V554.200H676.400V546.700H642.600z" fill="#000"/>
<!-- furniture -->
<g fill="none" stroke="#bcbcc8" stroke-width=".7" stroke-linejoin="round">
<!-- bedroom 2 twin beds -->
<rect x="487" y="263" width="32.800" height="73.600" rx="2"/>
<rect x="492.200" y="266.300" width="22.600" height="11.500" rx="2"/>
<path d="M505.500 281.700H519.800M504.500 284.700H519.800M505.500 281.700L487 293.600M487 300L496.600 303.400Q497.800 303.900 498.300 302.600L505.500 281.700M502 283.500L496.300 301.900"/>
<rect x="521" y="263" width="14.800" height="14.600"/>
<rect x="539.300" y="263" width="15.400" height="14.600"/>
<rect x="555.300" y="263" width="33.200" height="73.600" rx="2"/>
<rect x="560.500" y="266.300" width="22.600" height="11.500" rx="2"/>
<path d="M573.800 281.700H588.500M572.800 284.700H588.500M573.800 281.700L555.300 293.600M555.300 300L564.900 303.400Q566.100 303.900 566.600 302.600L573.800 281.700M570.300 283.500L564.600 301.900"/>
<!-- desk -->
<path d="M517.200 415V400.200H552V415"/>
<!-- bedroom 3 wardrobe -->
<path d="M600 261V274.400H702.300V261"/>
<!-- bedroom 3 bed -->
<rect x="669.100" y="351.400" width="33.200" height="73.400" rx="2"/>
<rect x="674.100" y="409.900" width="22.900" height="11.400" rx="2"/>
<path d="M669.100 406.400H683.300M669.100 402.800H684.300M683.300 406.400L702.300 393M702.300 387.100L692 384.300Q690.800 384 690.400 385.200L683.300 406.400M693 385.400L687.800 403.700"/>
<rect x="651.300" y="410.200" width="15.500" height="14.300"/>
<!-- bedroom 1 -->
<rect x="488.400" y="424.500" width="15.400" height="14.900"/>
<rect x="573.300" y="424.500" width="15.200" height="14.900"/>
<rect x="505.300" y="424.500" width="66.400" height="73.200" rx="2"/>
<rect x="510.600" y="428.100" width="22.200" height="11.300" rx="2"/>
<rect x="543.500" y="428.100" width="22.200" height="11.300" rx="2"/>
<path d="M541.100 442.600H570.700Q571.700 442.600 571.700 443.600M540 446.100H571.700M538.800 450.300H571.700M541.100 442.600L505.300 467.200M505.300 472.200L528.300 478.300Q529.700 478.600 530.100 477.400L541.100 442.600M536.400 445.500L524.300 477M539 444.500L527.500 478.100"/>
<!-- bathroom 1 sink -->
<path d="M512.700 583.500V579A10 10 0 0 1 532.800 579V583.500"/>
<path d="M514.700 583.500V579.500A8 8.500 0 0 1 530.800 579.500V583.500"/>
<ellipse cx="522.700" cy="577.600" rx="7.600" ry="3"/>
<path d="M522.700 574.500V581M521.500 575.500H523.900M520.500 582.500L522.700 578L524.900 582.500"/>
<!-- shower -->
<rect x="556.300" y="549.200" width="33.600" height="34.300"/>
<rect x="557.800" y="550.900" width="31.200" height="32.600"/>
<path d="M560.600 579.100L580.800 558.900M560.600 554.500H580.800M585.500 558.900V579.100M573.400 577V583.500"/>
<circle cx="585.500" cy="554.500" r="1.100"/>
<circle cx="573.400" cy="575.700" r="1.300"/>
<!-- bathroom 2 sink -->
<path d="M658.500 435.700V440A9.650 9.900 0 0 0 677.800 440V435.700"/>
<ellipse cx="667.900" cy="441.800" rx="7.400" ry="6"/>
<path d="M667.900 436.500V442.500M666.700 438H669.100"/>
<circle cx="667.900" cy="443.300" r=".6"/>
<!-- toilet -->
<path d="M701.700 454.600H705.900M701.700 468.200H705.900M701.700 454.600V468.200"/>
<path d="M701.700 456.500Q697 454.200 690.800 453.800A9.700 7.300 0 0 0 690.800 468.400Q697 468.400 701.700 466.300"/>
<ellipse cx="690.400" cy="461.100" rx="7.300" ry="5"/>
<!-- bathtub -->
<path d="M649 485.700H705.900"/>
<path d="M659.100 488.400H699.800Q703.800 488.400 703.800 492.400V506Q703.800 510 699.800 510H659.100Q651.100 510 651.100 499.200Q651.100 488.400 659.100 488.400z"/>
<path d="M698 498.700H705M702.300 496V501.500"/>
<circle cx="698" cy="498.700" r=".7"/>
</g>
<!-- stairs -->
<g fill="none" stroke="#c0c0c0" stroke-width=".7">
<path d="M643.500 545.200V520.200H704V581.600H648.900V555.900"/>
<path d="M643.500 545.200H676.400M648.900 555.900H676.400"/>
<path d="M654.500 520.200V545.200M665.500 520.200V545.200M675.600 520.200V545.200M654.500 555.900V581.600M665.500 555.900V581.600M675.600 555.900V581.600"/>
<path d="M649.700 532.600H676A15 18 0 0 1 676 568.600H648.900"/>
<path d="M678.200 548.400L692.500 520.200M678.200 548.400L704 534.500M678.200 550.600H704M678.200 553.600L704 566.900M678.200 553.600L692.500 581.600"/>
<path d="M676.400 546.700Q678.400 550.600 676.400 554.200"/>
<path d="M649.500 532.600L657.500 531.400V533.800z" fill="#fff" stroke="none"/>
</g>
<!-- windows -->
<g fill="none" stroke="#00aab6">
<rect x="479.4" y="313.3" width="5.200" height="33.4" fill="#000" stroke-width=".7"/><path d="M480.7 315.9V344.1M482.7 315.9V344.1" stroke-width=".45"/><path d="M480.0 315.9H484.0M480.0 344.1H484.0" stroke-width=".5"/>
<rect x="479.4" y="463.8" width="5.200" height="33.4" fill="#000" stroke-width=".7"/><path d="M480.7 466.4V494.6M482.7 466.4V494.6" stroke-width=".45"/><path d="M480.0 466.4H484.0M480.0 494.6H484.0" stroke-width=".5"/>
<rect x="706.4" y="313.3" width="5.200" height="33.5" fill="#000" stroke-width=".7"/><path d="M707.7 315.9V344.2M709.7 315.9V344.2" stroke-width=".45"/><path d="M707.0 315.9H711.0M707.0 344.2H711.0" stroke-width=".5"/>
</g>
<!-- doors -->
<g fill="none" stroke="#00a6b6" stroke-width=".75">
<!-- bedroom 2 door -->
<rect x="590.400" y="373" width="5.800" height="32.500" fill="#00002c"/><rect x="591.700" y="375.900" width="3.700" height="26.600" fill="#000"/>
<path d="M591 373.500A29.500 29.500 0 0 0 562.200 403.500"/><rect x="562.200" y="402.200" width="28.800" height="2.400"/>
<!-- bedroom 3 door -->
<rect x="604.400" y="366.600" width="33.200" height="5.900" fill="#00002c"/><rect x="608.100" y="368" width="26.100" height="3.100" fill="#000"/>
<path d="M606 338.300A30 29 0 0 1 636.800 366.400"/><rect x="605.700" y="338.300" width="2.300" height="28.100"/>
<!-- bedroom 1 door -->
<rect x="590.400" y="502.800" width="5.800" height="32.600" fill="#00002c"/><rect x="591.700" y="505.900" width="3.700" height="26.100" fill="#000"/>
<path d="M591 503.500A29.500 29.500 0 0 0 562.200 533"/><rect x="562.200" y="532.100" width="28.800" height="2.400"/>
<!-- bathroom 1 door -->
<rect x="508.400" y="536.100" width="33.400" height="5.800" fill="#00002c"/><rect x="512" y="537.300" width="26.100" height="3.100" fill="#000"/>
<path d="M540 570.700A30 29 0 0 1 509.100 542"/><rect x="538.200" y="542" width="2.500" height="28.700"/>
<!-- bathroom 2 door -->
<rect x="642.900" y="448.900" width="5.800" height="34" fill="#00002c"/><rect x="644.100" y="452.300" width="3.400" height="27.200" fill="#000"/>
<path d="M644 450A30 30 0 0 0 614 480"/><rect x="614" y="479.200" width="30" height="2.400"/>
</g>
<!-- labels -->
<g fill="#ffff00" font-size="9.500" text-anchor="middle">
<text x="530.500" y="367.600">Bedroom 2</text>
<text x="650.500" y="312.800">Bedroom 3</text>
<text x="524.300" y="513.600">Bedroom 1</text>
<text x="513.500" y="555.700">Bathroom 1</text>
<text x="676" y="474.200">Bathroom 2</text>
<text transform="translate(617.900,413.700) rotate(-90)">Hallway</text>
</g>
<g fill="#8c8c20" font-size="7" text-anchor="middle">
<text x="530.400" y="376.700">12.3m²</text>
<text x="650.400" y="322.800">11.5m²</text>
<text x="523.900" y="523.700">9.2m²</text>
<text x="502.400" y="565.800">3.3m²</text>
<text x="676" y="484.200">3.3m²</text>
<text transform="translate(627.900,413.800) rotate(-90)">7.4m²</text>
</g>
<!-- dimensions -->
<g fill="none" stroke="#008888" stroke-width=".9">
<path d="M713 255H754M713 589.500H754M750.400 255V589.500"/>
<path d="M479.200 590.500V632M711.700 590.500V632M479.200 628.300H711.700"/>
</g>
<g fill="#008686">
<path d="M750.400 255l1.300 7.500h-2.600zM750.400 589.500l1.300-7.500h-2.600zM479.200 628.300l7.500-1.300v2.600zM711.700 628.300l-7.500-1.300v2.600z"/>
<text x="594.900" y="626.800" font-size="10" text-anchor="middle">6.4</text>
<text transform="translate(748.300,422.400) rotate(-90)" font-size="10" text-anchor="middle">9.2</text>
</g>
<!-- origin -->
<g fill="none" stroke="#a00000" stroke-width="1">
<path d="M458.500 254.800H499M478.900 235V274.800"/><circle cx="478.900" cy="254.800" r="4.800"/>
</g>

<rect x="95" y="155" width="1043" height="577" fill="url(#grid)"/>
</g>
</svg>
<div id="right">
<div class="abs" style="left:0;top:0;width:3px;height:690px;background:linear-gradient(90deg,#e4e4e4,#c4c4c4)"></div>
<div class="abs" style="left:3px;top:0;width:298.5px;height:23px;background:linear-gradient(#e9e9e9,#d9d9d9);border-top:1px solid #c8c8c8"></div>
<div class="abs" style="left:3px;top:5px;width:297px;text-align:center;font-size:11.5px;line-height:14px;padding-left:36px;color:#1a1a1a;-webkit-text-stroke:.2px">Lista de capas</div>
<svg class="abs" style="left:3px;top:3px" width="40" height="16" viewBox="0 0 40 16"><circle cx="8" cy="8" r="6.900" fill="#505050"/><path d="M5.200 5.200l5.600 5.600M10.800 5.200l-5.600 5.600" stroke="#ececec" stroke-width="2.100" stroke-linecap="round"/><circle cx="26.200" cy="8" r="6.900" fill="#505050"/><rect x="25" y="4.400" width="5.400" height="4.800" fill="none" stroke="#ececec" stroke-width="1.100" rx="0.800"/><rect x="22.200" y="6.800" width="5.400" height="4.800" fill="#505050" stroke="#ececec" stroke-width="1.100" rx="0.800"/></svg>
<div class="abs" style="left:3px;top:23px;width:298.5px;height:26px;background:linear-gradient(#f4f4f4,#e9e9e9);border-top:1px solid #b4b4b4;border-bottom:2px solid #b0b0b0"></div>
<div class="abs" style="left:61px;top:24px;width:2px;height:24px;background:#aaa"></div>
<div class="abs" style="left:121px;top:24px;width:2px;height:24px;background:#aaa"></div>
<div class="abs" style="left:181px;top:24px;width:2px;height:24px;background:#aaa"></div>
<div class="abs" style="left:240.5px;top:24px;width:2px;height:24px;background:#aaa"></div>
<div class="abs" style="left:3px;top:49px;width:298.5px;height:641px;background:#fff"></div>
<div class="abs" style="left:8px;top:56px;width:16px;height:9px;background:#000000;border:1px solid #000"></div>
<div class="abs" style="left:30px;top:52px;font-size:13.2px;line-height:17px;white-space:nowrap;-webkit-text-stroke:.2px;color:#111">0</div>
<svg class="abs" style="left:262px;top:54px" width="16" height="12" viewBox="0 0 16 12"><path d="M0.6 6.2C2.6 2.6 5.2 1 8 1s5.4 1.6 7.4 5.2C13.4 9.4 10.8 11 8 11S2.6 9.4 0.6 6.2z" fill="#000"/><ellipse cx="8" cy="6.700" rx="4.800" ry="2.900" fill="#fff"/><circle cx="8" cy="6.200" r="3.100" fill="#000"/><circle cx="6.9" cy="5.1" r="1" fill="#fff"/></svg>
<svg class="abs" style="left:286px;top:52px" width="12" height="15" viewBox="0 0 12 15"><path d="M3 7V4.6a3 3 0 0 1 6 0V7" fill="none" stroke="#c4c4c4" stroke-width="1.4"/><rect x="1.2" y="6.6" width="9.6" height="7.4" rx="0.8" fill="#c4c4c4"/></svg>
<div class="abs" style="left:3px;top:70px;width:298.5px;height:20px;background:#0a4ad6"></div>
<div class="abs" style="left:8px;top:76px;width:16px;height:9px;background:#999a4c;border:1px solid #000"></div>
<div class="abs" style="left:30px;top:72px;font-size:13.2px;line-height:17px;white-space:nowrap;-webkit-text-stroke:.2px;color:#fff">Área da sala</div>
<svg class="abs" style="left:262px;top:74px" width="16" height="12" viewBox="0 0 16 12"><path d="M0.6 6.2C2.6 2.6 5.2 1 8 1s5.4 1.6 7.4 5.2C13.4 9.4 10.8 11 8 11S2.6 9.4 0.6 6.2z" fill="#27324a"/><ellipse cx="8" cy="6.700" rx="4.800" ry="2.900" fill="#0a4ad6"/><circle cx="8" cy="6.200" r="3.100" fill="#27324a"/><circle cx="6.9" cy="5.1" r="1" fill="#0a4ad6"/></svg>
<svg class="abs" style="left:286px;top:72px" width="12" height="15" viewBox="0 0 12 15"><path d="M3 7V4.6a3 3 0 0 1 6 0V7" fill="none" stroke="#aab6d2" stroke-width="1.4"/><rect x="1.2" y="6.6" width="9.6" height="7.4" rx="0.8" fill="#aab6d2"/></svg>
<svg class="abs" style="left:241px;top:72px" width="16" height="16" viewBox="0 0 16 16"><path d="M2 14l1-3.2L11.8 2l2.2 2.2L5.2 13z" fill="#d9a441" stroke="#7a5a1c" stroke-width="0.7"/><path d="M2 14l1-3.2 2.2 2.2z" fill="#e8d2a8"/><path d="M2 14l.45-1.4.95.95z" fill="#333"/></svg>
<div class="abs" style="left:8px;top:96px;width:16px;height:9px;background:#ffffff;border:1px solid #000"></div>
<div class="abs" style="left:30px;top:92px;font-size:13.2px;line-height:17px;white-space:nowrap;-webkit-text-stroke:.2px;color:#111">Defpoints</div>
<svg class="abs" style="left:262px;top:94px" width="16" height="12" viewBox="0 0 16 12"><path d="M0.6 6.2C2.6 2.6 5.2 1 8 1s5.4 1.6 7.4 5.2C13.4 9.4 10.8 11 8 11S2.6 9.4 0.6 6.2z" fill="#000"/><ellipse cx="8" cy="6.700" rx="4.800" ry="2.900" fill="#fff"/><circle cx="8" cy="6.200" r="3.100" fill="#000"/><circle cx="6.9" cy="5.1" r="1" fill="#fff"/></svg>
<svg class="abs" style="left:286px;top:92px" width="12" height="15" viewBox="0 0 12 15"><path d="M3 7V4.6a3 3 0 0 1 6 0V7" fill="none" stroke="#c4c4c4" stroke-width="1.4"/><rect x="1.2" y="6.6" width="9.6" height="7.4" rx="0.8" fill="#c4c4c4"/></svg>
<div class="abs" style="left:8px;top:116px;width:16px;height:9px;background:#008080;border:1px solid #000"></div>
<div class="abs" style="left:30px;top:112px;font-size:13.2px;line-height:17px;white-space:nowrap;-webkit-text-stroke:.2px;color:#111">Dimensiones</div>
<svg class="abs" style="left:262px;top:114px" width="16" height="12" viewBox="0 0 16 12"><path d="M0.6 6.2C2.6 2.6 5.2 1 8 1s5.4 1.6 7.4 5.2C13.4 9.4 10.8 11 8 11S2.6 9.4 0.6 6.2z" fill="#000"/><ellipse cx="8" cy="6.700" rx="4.800" ry="2.900" fill="#fff"/><circle cx="8" cy="6.200" r="3.100" fill="#000"/><circle cx="6.9" cy="5.1" r="1" fill="#fff"/></svg>
<svg class="abs" style="left:286px;top:112px" width="12" height="15" viewBox="0 0 12 15"><path d="M3 7V4.6a3 3 0 0 1 6 0V7" fill="none" stroke="#c4c4c4" stroke-width="1.4"/><rect x="1.2" y="6.6" width="9.6" height="7.4" rx="0.8" fill="#c4c4c4"/></svg>
<div class="abs" style="left:8px;top:136px;width:16px;height:9px;background:#c0c0c0;border:1px solid #000"></div>
<div class="abs" style="left:30px;top:132px;font-size:13.2px;line-height:17px;white-space:nowrap;-webkit-text-stroke:.2px;color:#111">Escalera</div>
<svg class="abs" style="left:262px;top:134px" width="16" height="12" viewBox="0 0 16 12"><path d="M0.6 6.2C2.6 2.6 5.2 1 8 1s5.4 1.6 7.4 5.2C13.4 9.4 10.8 11 8 11S2.6 9.4 0.6 6.2z" fill="#000"/><ellipse cx="8" cy="6.700" rx="4.800" ry="2.900" fill="#fff"/><circle cx="8" cy="6.200" r="3.100" fill="#000"/><circle cx="6.9" cy="5.1" r="1" fill="#fff"/></svg>
<svg class="abs" style="left:286px;top:132px" width="12" height="15" viewBox="0 0 12 15"><path d="M3 7V4.6a3 3 0 0 1 6 0V7" fill="none" stroke="#c4c4c4" stroke-width="1.4"/><rect x="1.2" y="6.6" width="9.6" height="7.4" rx="0.8" fill="#c4c4c4"/></svg>
<div class="abs" style="left:8px;top:156px;width:16px;height:9px;background:#ffff00;border:1px solid #000"></div>
<div class="abs" style="left:30px;top:152px;font-size:13.2px;line-height:17px;white-space:nowrap;-webkit-text-stroke:.2px;color:#111">Etiquetas</div>
<svg class="abs" style="left:262px;top:154px" width="16" height="12" viewBox="0 0 16 12"><path d="M0.6 6.2C2.6 2.6 5.2 1 8 1s5.4 1.6 7.4 5.2C13.4 9.4 10.8 11 8 11S2.6 9.4 0.6 6.2z" fill="#000"/><ellipse cx="8" cy="6.700" rx="4.800" ry="2.900" fill="#fff"/><circle cx="8" cy="6.200" r="3.100" fill="#000"/><circle cx="6.9" cy="5.1" r="1" fill="#fff"/></svg>
<svg class="abs" style="left:286px;top:152px" width="12" height="15" viewBox="0 0 12 15"><path d="M3 7V4.6a3 3 0 0 1 6 0V7" fill="none" stroke="#c4c4c4" stroke-width="1.4"/><rect x="1.2" y="6.6" width="9.6" height="7.4" rx="0.8" fill="#c4c4c4"/></svg>
<div class="abs" style="left:8px;top:176px;width:16px;height:9px;background:#000033;border:1px solid #000"></div>
<div class="abs" style="left:30px;top:172px;font-size:13.2px;line-height:17px;white-space:nowrap;-webkit-text-stroke:.2px;color:#111">Fondo</div>
<svg class="abs" style="left:262px;top:174px" width="16" height="12" viewBox="0 0 16 12"><path d="M0.6 6.2C2.6 2.6 5.2 1 8 1s5.4 1.6 7.4 5.2C13.4 9.4 10.8 11 8 11S2.6 9.4 0.6 6.2z" fill="#000"/><ellipse cx="8" cy="6.700" rx="4.800" ry="2.900" fill="#fff"/><circle cx="8" cy="6.200" r="3.100" fill="#000"/><circle cx="6.9" cy="5.1" r="1" fill="#fff"/></svg>
<svg class="abs" style="left:286px;top:172px" width="12" height="15" viewBox="0 0 12 15"><path d="M3 7V4.6a3 3 0 0 1 6 0V7" fill="none" stroke="#f60000" stroke-width="1.4"/><rect x="1.2" y="6.6" width="9.6" height="7.4" rx="0.8" fill="#f60000"/></svg>
<div class="abs" style="left:8px;top:196px;width:16px;height:9px;background:#c0c0c0;border:1px solid #000"></div>
<div class="abs" style="left:30px;top:192px;font-size:13.2px;line-height:17px;white-space:nowrap;-webkit-text-stroke:.2px;color:#111">Interiores</div>
<svg class="abs" style="left:262px;top:194px" width="16" height="12" viewBox="0 0 16 12"><path d="M0.6 6.2C2.6 2.6 5.2 1 8 1s5.4 1.6 7.4 5.2C13.4 9.4 10.8 11 8 11S2.6 9.4 0.6 6.2z" fill="#000"/><ellipse cx="8" cy="6.700" rx="4.800" ry="2.900" fill="#fff"/><circle cx="8" cy="6.200" r="3.100" fill="#000"/><circle cx="6.9" cy="5.1" r="1" fill="#fff"/></svg>
<svg class="abs" style="left:286px;top:192px" width="12" height="15" viewBox="0 0 12 15"><path d="M3 7V4.6a3 3 0 0 1 6 0V7" fill="none" stroke="#c4c4c4" stroke-width="1.4"/><rect x="1.2" y="6.6" width="9.6" height="7.4" rx="0.8" fill="#c4c4c4"/></svg>
<div class="abs" style="left:8px;top:216px;width:16px;height:9px;background:#a0a0a4;border:1px solid #000"></div>
<div class="abs" style="left:30px;top:212px;font-size:13.2px;line-height:17px;white-space:nowrap;-webkit-text-stroke:.2px;color:#111">Paredes</div>
<svg class="abs" style="left:262px;top:214px" width="16" height="12" viewBox="0 0 16 12"><path d="M0.6 6.2C2.6 2.6 5.2 1 8 1s5.4 1.6 7.4 5.2C13.4 9.4 10.8 11 8 11S2.6 9.4 0.6 6.2z" fill="#000"/><ellipse cx="8" cy="6.700" rx="4.800" ry="2.900" fill="#fff"/><circle cx="8" cy="6.200" r="3.100" fill="#000"/><circle cx="6.9" cy="5.1" r="1" fill="#fff"/></svg>
<svg class="abs" style="left:286px;top:212px" width="12" height="15" viewBox="0 0 12 15"><path d="M3 7V4.6a3 3 0 0 1 6 0V7" fill="none" stroke="#c4c4c4" stroke-width="1.4"/><rect x="1.2" y="6.6" width="9.6" height="7.4" rx="0.8" fill="#c4c4c4"/></svg>
<div class="abs" style="left:8px;top:236px;width:16px;height:9px;background:#00ffff;border:1px solid #000"></div>
<div class="abs" style="left:30px;top:232px;font-size:13.2px;line-height:17px;white-space:nowrap;-webkit-text-stroke:.2px;color:#111">Puertas</div>
<svg class="abs" style="left:262px;top:234px" width="16" height="12" viewBox="0 0 16 12"><path d="M0.6 6.2C2.6 2.6 5.2 1 8 1s5.4 1.6 7.4 5.2C13.4 9.4 10.8 11 8 11S2.6 9.4 0.6 6.2z" fill="#000"/><ellipse cx="8" cy="6.700" rx="4.800" ry="2.900" fill="#fff"/><circle cx="8" cy="6.200" r="3.100" fill="#000"/><circle cx="6.9" cy="5.1" r="1" fill="#fff"/></svg>
<svg class="abs" style="left:286px;top:232px" width="12" height="15" viewBox="0 0 12 15"><path d="M3 7V4.6a3 3 0 0 1 6 0V7" fill="none" stroke="#c4c4c4" stroke-width="1.4"/><rect x="1.2" y="6.6" width="9.6" height="7.4" rx="0.8" fill="#c4c4c4"/></svg>
<div class="abs" style="left:8px;top:256px;width:16px;height:9px;background:#00ffff;border:1px solid #000"></div>
<div class="abs" style="left:30px;top:252px;font-size:13.2px;line-height:17px;white-space:nowrap;-webkit-text-stroke:.2px;color:#111">Windows</div>
<svg class="abs" style="left:262px;top:254px" width="16" height="12" viewBox="0 0 16 12"><path d="M0.6 6.2C2.6 2.6 5.2 1 8 1s5.4 1.6 7.4 5.2C13.4 9.4 10.8 11 8 11S2.6 9.4 0.6 6.2z" fill="#000"/><ellipse cx="8" cy="6.700" rx="4.800" ry="2.900" fill="#fff"/><circle cx="8" cy="6.200" r="3.100" fill="#000"/><circle cx="6.9" cy="5.1" r="1" fill="#fff"/></svg>
<svg class="abs" style="left:286px;top:252px" width="12" height="15" viewBox="0 0 12 15"><path d="M3 7V4.6a3 3 0 0 1 6 0V7" fill="none" stroke="#c4c4c4" stroke-width="1.4"/><rect x="1.2" y="6.6" width="9.6" height="7.4" rx="0.8" fill="#c4c4c4"/></svg>
<svg class="abs" style="left:24px;top:30px" width="16" height="12" viewBox="0 0 16 12"><path d="M0.6 6.2C2.6 2.6 5.2 1 8 1s5.4 1.6 7.4 5.2C13.4 9.4 10.8 11 8 11S2.6 9.4 0.6 6.2z" fill="#000"/><ellipse cx="8" cy="6.700" rx="4.800" ry="2.900" fill="#efefef"/><circle cx="8" cy="6.200" r="3.100" fill="#000"/><circle cx="6.9" cy="5.1" r="1" fill="#efefef"/></svg>
<svg class="abs" style="left:84px;top:30px" width="16" height="12" viewBox="0 0 16 12"><path d="M0.6 6.2C2.6 2.6 5.2 1 8 1s5.4 1.6 7.4 5.2C13.4 9.4 10.8 11 8 11S2.6 9.4 0.6 6.2z" fill="#a9a9a9"/><ellipse cx="8" cy="6.700" rx="4.800" ry="2.900" fill="#efefef"/><circle cx="8" cy="6.200" r="3.100" fill="#a9a9a9"/><circle cx="6.9" cy="5.1" r="1" fill="#efefef"/></svg>
<svg class="abs" style="left:144px;top:28px" width="16" height="16" viewBox="0 0 16 16"><path d="M6.700 2.300h2.600v4.400h4.400v2.600H9.300v4.400H6.700V9.300H2.300V6.700h4.400z" fill="#e60000" stroke="#7a0000" stroke-width="0.8"/></svg>
<svg class="abs" style="left:204px;top:28px" width="16" height="16" viewBox="0 0 16 16"><rect x="2.300" y="6.700" width="11.400" height="2.600" fill="#e60000" stroke="#7a0000" stroke-width="0.800"/></svg>
<svg class="abs" style="left:263px;top:27px" width="18" height="18" viewBox="0 0 16 16"><path d="M2 14l1-3.2L11.8 2l2.2 2.2L5.2 13z" fill="#d9a441" stroke="#7a5a1c" stroke-width="0.7"/><path d="M2 14l1-3.2 2.2 2.2z" fill="#e8d2a8"/><path d="M2 14l.45-1.4.95.95z" fill="#333"/><path d="M11.8 2l2.2 2.2-1 1L10.8 3z" fill="#d66"/></svg>
</div>
<div class="abs" style="left:1263.6px;top:145px;width:79.6px;height:79.6px;border-radius:50%;background:radial-gradient(closest-side,rgba(255,255,255,0) 0,rgba(255,255,255,0) 76%,rgba(225,233,242,.5) 82%,rgba(160,182,204,.7) 90%,rgba(150,175,198,.6) 95%,rgba(150,175,198,0) 100%)"></div>
<svg class="abs" style="left:1300.2px;top:181.8px" width="21.400" height="34.560" viewBox="0 0 22 32" preserveAspectRatio="none"><path d="M2.8 2.2v21.2l4.9-4.6 3.7 8.8 3.3-1.4-3.7-8.6h6.6z" fill="#fff" stroke="#000" stroke-width="1.3" stroke-linejoin="miter"/></svg>
<div id="rtb">
<div class="abs" style="left:0;top:0;width:1px;height:690px;background:#cfcfcf"></div>
<div class="abs" style="left:1px;top:0;width:1px;height:690px;background:#f0f0f0"></div>
<div class="abs" style="left:7px;top:9px;width:27px;height:2px;background:repeating-linear-gradient(to right,#a8a8a8 0,#a8a8a8 2px,transparent 2px,transparent 6.2px)"></div>
<div class="abs" style="left:2.500px;top:154px;width:42px;height:1px;background:repeating-linear-gradient(to right,#555 0,#555 1.2px,transparent 1.2px,transparent 3.33px)"></div>
<div class="abs" style="left:2.500px;top:301px;width:42px;height:1px;background:repeating-linear-gradient(to right,#555 0,#555 1.2px,transparent 1.2px,transparent 3.33px)"></div>
<div class="sel" style="left:1.5px;top:13.500px;width:42.500px;height:42px;border-radius:6px"></div>
<div class="sel" style="left:1.5px;top:310.200px;width:42.500px;height:42.500px;border-radius:6px"></div>
<svg class="abs" style="left:8.5px;top:20px" width="28" height="28" viewBox="0 0 28 28"><rect x="0.5" y="0.5" width="27" height="27" fill="#fff" stroke="#333" stroke-width=".8"/><rect x="0" y="0" width="28" height="4.6" fill="#000"/><rect x="0.8" y="0.8" width="3.2" height="3.2" fill="#fff"/><path d="M7.200 14.300L16.500 9.300V17.800L7.200 22.600z" fill="#8c8c8c" stroke="#444" stroke-width=".6"/><path d="M8.800 14.200L18.500 9.200V17.700L8.800 22.600z" fill="#b4b4b4" stroke="#555" stroke-width=".5"/><path d="M10.400 14.100L20.800 9V17.500L10.400 22.600z" fill="#fbfbfb" stroke="#444" stroke-width=".6"/><path d="M13.200 19.800L17.900 12.200L18.100 17.300M14.600 17.900L18 16" fill="none" stroke="#f03a3a" stroke-width=".9"/></svg>
<svg class="abs" style="left:8.5px;top:67px" width="28" height="28" viewBox="0 0 28 28"><rect x="0.5" y="0.5" width="27" height="27" fill="#fff" stroke="#333" stroke-width=".8"/><rect x="0" y="0" width="28" height="4.6" fill="#000"/><rect x="0.8" y="0.8" width="3.2" height="3.2" fill="#fff"/><rect x="7.5" y="10.5" width="10" height="7.5" fill="#f5e9b8" stroke="#555" stroke-width=".8"/><circle cx="16.5" cy="17" r="4.2" fill="#f5e9b8" fill-opacity=".8" stroke="#555" stroke-width=".8"/></svg>
<svg class="abs" style="left:8.5px;top:113px" width="28" height="28" viewBox="0 0 28 28"><rect x="0.5" y="0.5" width="27" height="27" fill="#fff" stroke="#333" stroke-width=".8"/><rect x="0" y="0" width="28" height="4.6" fill="#000"/><rect x="0.8" y="0.8" width="3.2" height="3.2" fill="#fff"/><rect x="5.5" y="10.5" width="17" height="11" rx="2" fill="#f3f3f3" stroke="#c9d6ea" stroke-width="1"/></svg>
<svg class="abs" style="left:8.5px;top:169px" width="28" height="28" viewBox="0 0 28 28"><rect x="0.5" y="0.5" width="27" height="27" fill="#fff" stroke="#333" stroke-width=".8"/><rect x="0" y="0" width="28" height="4.6" fill="#000"/><rect x="0.8" y="0.8" width="3.2" height="3.2" fill="#fff"/><g fill="#000"><rect x="3.5" y="8.5" width="4" height="3"/><rect x="3.5" y="14.5" width="4" height="3"/><rect x="3.5" y="20.5" width="4" height="3"/></g><g fill="#fff" stroke="#333" stroke-width=".7"><rect x="10.5" y="8.5" width="14" height="3"/><rect x="10.5" y="14.5" width="14" height="3"/><rect x="10.5" y="20.5" width="14" height="3"/></g></svg>
<svg class="abs" style="left:8.5px;top:215px" width="28" height="28" viewBox="0 0 28 28"><rect x="0.5" y="0.5" width="27" height="27" fill="#fff" stroke="#333" stroke-width=".8"/><rect x="0" y="0" width="28" height="4.6" fill="#000"/><rect x="0.8" y="0.8" width="3.2" height="3.2" fill="#fff"/><path d="M7 10.5c0-1.4 14-1.4 14 0l-5.4 6.5v5.6l-3-1.6v-4z" fill="#a8a8a8" stroke="#555" stroke-width=".7"/><ellipse cx="14" cy="10.4" rx="7" ry="1.4" fill="#ddd" stroke="#555" stroke-width=".6"/></svg>
<svg class="abs" style="left:8.5px;top:261px" width="28" height="28" viewBox="0 0 28 28"><rect x="0.5" y="0.5" width="27" height="27" fill="#fff" stroke="#333" stroke-width=".8"/><rect x="0" y="0" width="28" height="4.6" fill="#000"/><rect x="0.8" y="0.8" width="3.2" height="3.2" fill="#fff"/><path d="M6 9.5l4.5 4v5l-4.5 4z" fill="#e8e8e8" stroke="#444" stroke-width=".8"/><rect x="10.5" y="13" width="10" height="6.5" rx="1.5" fill="#999" stroke="#666" stroke-width=".5"/><path d="M4 16.3h20" stroke="#f88" stroke-width=".8" stroke-dasharray="2 1"/></svg>
<svg class="abs" style="left:8.5px;top:317px" width="28" height="28" viewBox="0 0 28 28"><rect x="0.5" y="0.5" width="27" height="27" fill="#fff" stroke="#333" stroke-width=".8"/><rect x="0" y="0" width="28" height="4.6" fill="#000"/><rect x="0.8" y="0.8" width="3.2" height="3.2" fill="#fff"/><g stroke="#8a8a8a" stroke-width=".8" stroke-dasharray="5 .8 3.500 .8"><path d="M3 8.600h13.500M3 12h12.500M3 15.400h15.500M3 18.800h16.500"/></g><path d="M2.500 26.300l1.200-1.200 1.200 1.200" fill="none" stroke="#555" stroke-width=".5"/><path d="M0.5 22.5h27" stroke="#333" stroke-width=".7"/><text x="8.5" y="26.6" font-size="3.6" fill="#333" font-family="Liberation Sans,sans-serif">command</text></svg>
<svg class="abs" style="left:8.5px;top:364px" width="28" height="28" viewBox="0 0 28 28"><rect x="0.5" y="0.5" width="27" height="27" fill="#fff" stroke="#333" stroke-width=".8"/><rect x="0" y="0" width="28" height="4.6" fill="#000"/><rect x="0.8" y="0.8" width="3.2" height="3.2" fill="#fff"/><rect x="7.5" y="9.5" width="13" height="14" rx="1" fill="#c98a3c" stroke="#8a5a1a" stroke-width=".8"/><rect x="9.3" y="11.3" width="9.4" height="10.6" fill="#f2f2f2" stroke="#999" stroke-width=".4"/><rect x="11" y="8" width="6" height="3" rx=".8" fill="#999" stroke="#555" stroke-width=".5"/><path d="M10.8 14.5h6.4M10.8 16.3h6.4M10.8 18.1h4.5" stroke="#bbb" stroke-width=".6"/><path d="M18.7 18.8v3.1h-3.1z" fill="#999"/></svg>
</div>
<div id="status">
<div style="left:2px;top:10px">17.9313,-5.3896</div>
<div style="left:2px;top:31px">@17.9313,-5.3896</div>
<div class="abs" style="left:253px;top:5px;width:1px;height:40px;background:#7a7a7a"></div>
<div style="left:256px;top:10px">18.7237&lt;343.27°</div>
<div style="left:256px;top:31px">@18.7237&lt;343.27°</div>
<div style="left:569px;top:20px">Seleccionar entidad o región</div>
<div style="left:949px;top:20px">No hay entidades seleccionadas.</div>
<div class="abs" style="left:506px;top:22px;width:6px;height:6px;border-radius:3px;background:#c6c6c6"></div>
<div class="abs" style="left:940px;top:22px;width:6px;height:6px;border-radius:3px;background:#c6c6c6"></div>
<div class="abs" style="left:1269px;top:22px;width:6px;height:6px;border-radius:3px;background:#c6c6c6"></div>
<div class="abs" style="left:0;top:0;width:1500px;height:1px;background:#d2d2d2"></div>
<svg class="abs" style="left:714px;top:6px" width="24" height="36" viewBox="714 803 24 36"><rect x="717.400" y="806.300" width="17.400" height="29.200" rx="8.700" fill="#fff" stroke="#444" stroke-width=".8"/><path d="M717.400 819.600Q726.100 817.600 734.800 819.600" fill="none" stroke="#3a3a3a" stroke-width="1.400"/><path d="M726.100 806.300V808M726.100 815.800V818.600" stroke="#3a3a3a" stroke-width="1.200"/><ellipse cx="726.100" cy="811.900" rx="1.700" ry="3.900" fill="#fff" stroke="#3a3a3a" stroke-width="1.100"/></svg>
</div>
</body>
</html>
